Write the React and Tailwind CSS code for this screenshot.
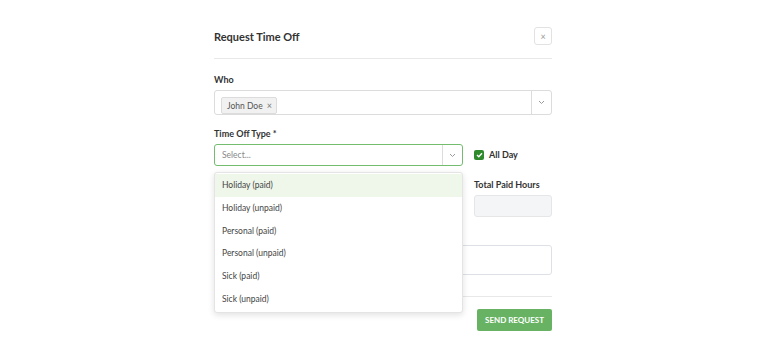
import { useState } from "react";

const options = [
  "Holiday (paid)",
  "Holiday (unpaid)",
  "Personal (paid)",
  "Personal (unpaid)",
  "Sick (paid)",
  "Sick (unpaid)",
];

const Chevron = () => (
  <svg width="7" height="5" viewBox="0 0 7 5" fill="none">
    <path d="M1 1l2.5 2.5L6 1" stroke="#9a9a9a" strokeWidth="1" />
  </svg>
);

const App = () => {
  const [active] = useState(0);

  return (
    <div className="min-h-screen bg-white text-[#333] font-['Lato','Liberation_Sans',sans-serif] flex justify-center pl-[8px]">
      <div className="w-[338px] pt-[27px]">
        <div className="flex items-center justify-between pb-[13px] border-b border-[#e8e8e8]">
          <h2 className="text-[11px] font-bold leading-none">Request Time Off</h2>
          <button className="w-[18px] h-[18px] border border-[#e2e2e2] rounded-[3px] flex items-center justify-center text-[9px] text-[#999] leading-none">
            ×
          </button>
        </div>

        <div className="mt-[15px] text-[9px] font-bold leading-[12px]">Who</div>
        <div className="mt-[4px] h-[25px] flex items-center border border-[#dcdcdc] rounded-[3px]">
          <div className="flex-1 pl-[6px]">
            <span className="inline-flex items-center gap-[4px] h-[17px] pl-[5px] pr-[4px] bg-[#f1f1f1] border border-[#dcdcdc] rounded-[2px] text-[8.5px] text-[#555]">
              John Doe <span className="text-[9px] text-[#777]">×</span>
            </span>
          </div>
          <div className="w-[20px] h-full border-l border-[#dcdcdc] flex items-center justify-center">
            <Chevron />
          </div>
        </div>

        <div className="mt-[13px] text-[9px] font-bold leading-[12px]">Time Off Type *</div>
        <div className="mt-[4px] flex gap-[11px]">
          <div className="flex-1">
            <div className="relative">
              <div className="h-[22px] flex items-center border border-[#74bd6e] rounded-[3px]">
                <div className="flex-1 pl-[7px] text-[8.5px] text-[#888]">Select...</div>
                <div className="w-[20px] h-full border-l border-[#dcdcdc] flex items-center justify-center">
                  <Chevron />
                </div>
              </div>
              <div className="absolute z-10 left-0 right-0 top-[28px] bg-white border border-[#e4e4e4] rounded-[3px] shadow-[0_2px_6px_rgba(0,0,0,0.12)] py-[1px]">
                {options.map((o, i) => (
                  <div
                    key={o}
                    className={`h-[22.75px] flex items-center pl-[7px] text-[8.5px] text-[#444] ${
                      i === active ? "bg-[#eef7ea]" : ""
                    }`}
                  >
                    {o}
                  </div>
                ))}
              </div>
            </div>

            {/* date field sits under the open menu */}
            <div className="mt-[13px] h-[12px]" />
            <div className="mt-[4px] h-[22px] border border-[#dcdcdc] rounded-[3px]" />
          </div>

          <div className="w-[78px]">
            <div className="h-[22px] flex items-center gap-[5px]">
              <span className="w-[10px] h-[10px] rounded-[2px] bg-[#2f8a2c] flex items-center justify-center">
                <svg width="7" height="6" viewBox="0 0 7 6" fill="none">
                  <path d="M1 3l1.8 1.8L6 1.2" stroke="#fff" strokeWidth="1.4" />
                </svg>
              </span>
              <span className="text-[9px] font-bold">All Day</span>
            </div>
            <div className="mt-[13px] text-[9px] font-bold leading-[12px] whitespace-nowrap">Total Paid Hours</div>
            <div className="mt-[4px] h-[22px] bg-[#f4f5f6] border border-[#e4e6e8] rounded-[3px]" />
          </div>
        </div>

        <div className="mt-[12px] h-[12px]" />
        <div className="mt-[4px] h-[30px] border border-[#dde1e5] rounded-[3px]" />

        <div className="mt-[21px] border-t border-[#e8e8e8]" />
        <div className="mt-[12px] flex justify-end">
          <button className="w-[75px] h-[22px] bg-[#67b263] rounded-[2px] text-white text-[8px] font-bold">
            SEND REQUEST
          </button>
        </div>
      </div>
    </div>
  );
};

export default App;
